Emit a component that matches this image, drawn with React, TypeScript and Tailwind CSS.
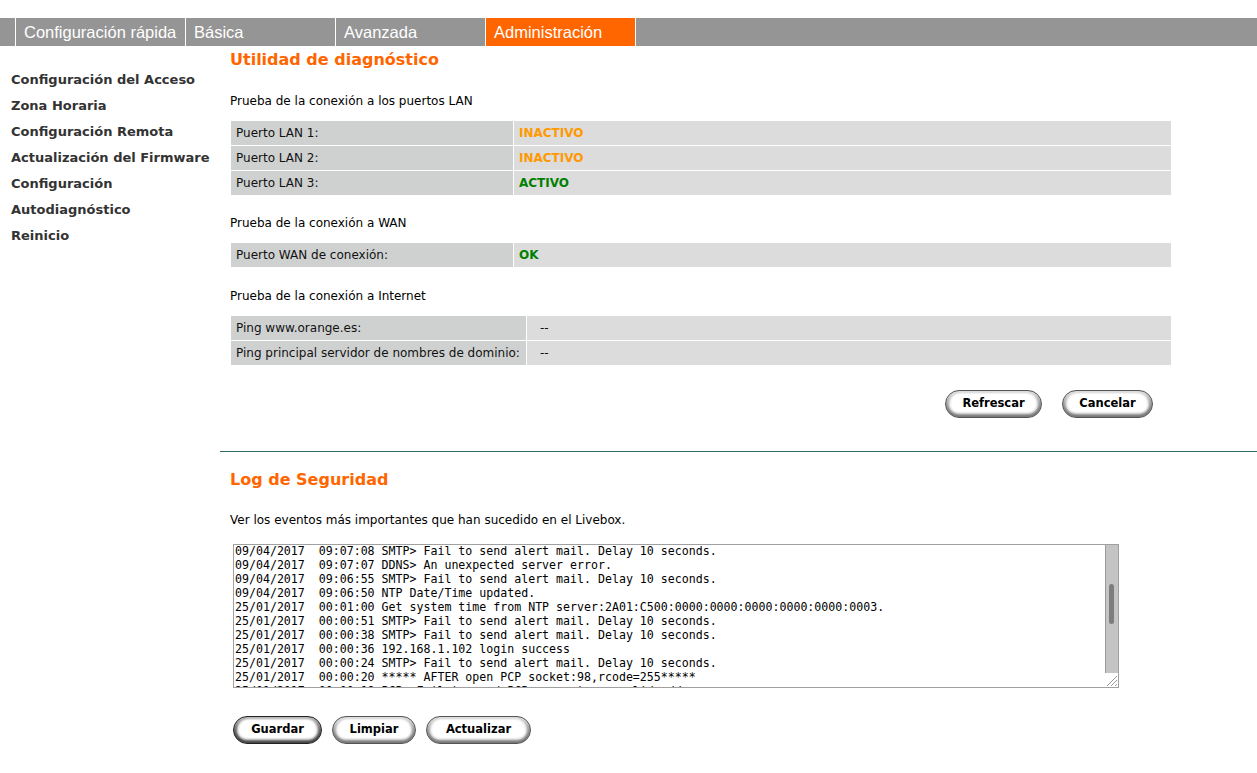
import React from 'react'

const tabs = [
  { label: 'Configuración rápida', w: 'w-[170px]', active: false },
  { label: 'Básica', w: 'w-[150px]', active: false },
  { label: 'Avanzada', w: 'w-[150px]', active: false },
  { label: 'Administración', w: 'w-[150px]', active: true },
]

const menu = [
  'Configuración del Acceso',
  'Zona Horaria',
  'Configuración Remota',
  'Actualización del Firmware',
  'Configuración',
  'Autodiagnóstico',
  'Reinicio',
]

const logLines = [
  '09/04/2017  09:07:08 SMTP> Fail to send alert mail. Delay 10 seconds.',
  '09/04/2017  09:07:07 DDNS> An unexpected server error.',
  '09/04/2017  09:06:55 SMTP> Fail to send alert mail. Delay 10 seconds.',
  '09/04/2017  09:06:50 NTP Date/Time updated.',
  '25/01/2017  00:01:00 Get system time from NTP server:2A01:C500:0000:0000:0000:0000:0000:0003.',
  '25/01/2017  00:00:51 SMTP> Fail to send alert mail. Delay 10 seconds.',
  '25/01/2017  00:00:38 SMTP> Fail to send alert mail. Delay 10 seconds.',
  '25/01/2017  00:00:36 192.168.1.102 login success',
  '25/01/2017  00:00:24 SMTP> Fail to send alert mail. Delay 10 seconds.',
  '25/01/2017  00:00:20 ***** AFTER open PCP socket:98,rcode=255*****',
  '25/01/2017  00:00:19 PCP> Fail to send PCP request, no valid address',
]

type Row = { label: string; value: string; tone?: 'warn' | 'ok' | 'plain' }

function StatusTable({ rows, labelW }: { rows: Row[]; labelW: string }) {
  return (
    <table className="w-[942px] border-separate border-spacing-[1px] text-[12px] text-[#111]">
      <tbody>
        {rows.map((r) => (
          <tr key={r.label} className="h-[24px]">
            <td className={`${labelW} bg-[#cfd1d0] px-[5px] align-middle`}>{r.label}</td>
            <td
              className={`bg-[#dcdcdc] align-middle ${
                r.tone === 'plain' ? 'pl-[13px]' : 'pl-[5px] font-bold'
              } ${r.tone === 'warn' ? 'text-[#ff9900]' : r.tone === 'ok' ? 'text-[#008000]' : 'text-[#111]'}`}
            >
              {r.value}
            </td>
          </tr>
        ))}
      </tbody>
    </table>
  )
}

function Pill({ label, w, primary }: { label: string; w: string; primary?: boolean }) {
  return (
    <button
      className={`${w} h-[28px] rounded-full bg-white text-[11.5px] font-bold text-black ${
        primary
          ? 'border border-[#222] shadow-[inset_0_-3px_3px_#444,inset_0_2px_2px_#bbb,inset_3px_0_3px_#666,inset_-3px_0_3px_#666]'
          : 'border border-[#555] shadow-[inset_0_-3px_3px_#777,inset_0_2px_2px_#ddd,inset_3px_0_3px_#aaa,inset_-3px_0_3px_#999]'
      }`}
    >
      {label}
    </button>
  )
}

export default function App() {
  return (
    <div className="min-h-[773px] w-[1257px] bg-white font-['DejaVu_Sans',sans-serif]">
      <div className="h-[18px]" />
      <nav className="flex h-[28px] bg-[#959595] font-['Liberation_Sans',Arial,sans-serif] text-[16.5px] text-white">
        <div className="w-[16px] border-r border-white" />
        {tabs.map((t) => (
          <div
            key={t.label}
            className={`${t.w} flex items-center border-r border-white pl-[8px] ${t.active ? 'bg-[#ff6600]' : ''}`}
          >
            {t.label}
          </div>
        ))}
      </nav>

      <div className="flex">
        <aside className="w-[220px] shrink-0 pl-[11px] pt-[21px]">
          {menu.map((m) => (
            <div key={m} className="h-[26px] text-[13px] font-bold leading-[26px] text-[#333]">
              {m}
            </div>
          ))}
        </aside>

        <main className="flex-1">
          <section className="pl-[10px]">
            <h1 className="mt-[1px] h-[26px] text-[16px] font-bold leading-[26px] text-[#ff6600]">
              Utilidad de diagnóstico
            </h1>
            <p className="mt-[20px] text-[12px] leading-[16px] text-black">
              Prueba de la conexión a los puertos LAN
            </p>
            <div className="mt-[11px]">
              <StatusTable
                labelW="w-[282px]"
                rows={[
                  { label: 'Puerto LAN 1:', value: 'INACTIVO', tone: 'warn' },
                  { label: 'Puerto LAN 2:', value: 'INACTIVO', tone: 'warn' },
                  { label: 'Puerto LAN 3:', value: 'ACTIVO', tone: 'ok' },
                ]}
              />
            </div>
            <p className="mt-[19px] text-[12px] leading-[16px] text-black">Prueba de la conexión a WAN</p>
            <div className="mt-[11px]">
              <StatusTable labelW="w-[282px]" rows={[{ label: 'Puerto WAN de conexión:', value: 'OK', tone: 'ok' }]} />
            </div>
            <p className="mt-[20px] text-[12px] leading-[16px] text-black">Prueba de la conexión a Internet</p>
            <div className="mt-[11px]">
              <StatusTable
                labelW="w-[295px]"
                rows={[
                  { label: 'Ping www.orange.es:', value: '--', tone: 'plain' },
                  { label: 'Ping principal servidor de nombres de dominio:', value: '--', tone: 'plain' },
                ]}
              />
            </div>
            <div className="mt-[24px] flex w-[942px] justify-end gap-[20px] pr-[19px]">
              <Pill label="Refrescar" w="w-[97px]" />
              <Pill label="Cancelar" w="w-[91px]" />
            </div>
          </section>

          <section className="mt-[33px] border-t border-[#2f6a6a] pl-[10px]">
            <h2 className="mt-[15px] h-[26px] text-[16px] font-bold leading-[26px] text-[#ff6600]">
              Log de Seguridad
            </h2>
            <p className="mt-[19px] text-[12px] leading-[16px] text-black">
              Ver los eventos más importantes que han sucedido en el Livebox.
            </p>
            <div className="relative ml-[3px] mt-[16px] h-[144px] w-[886px] overflow-hidden border border-[#a0a0a0] bg-white">
              <div className="-mt-[1px] pl-[1px] font-['DejaVu_Sans_Mono',monospace] text-[11.6px] leading-[14px] whitespace-pre text-black">
                {logLines.map((l, i) => (
                  <div key={i}>{l}</div>
                ))}
              </div>
              <div className="absolute right-0 top-0 h-[128px] w-[13px] border-l border-[#9a9a9a] bg-[#c4c4c4]">
                <div className="absolute left-[3px] top-[39px] h-[40px] w-[5px] rounded-full bg-[#7d7d7d]" />
              </div>
              <svg className="absolute bottom-0 right-0" width="14" height="14" viewBox="0 0 14 14">
                <path d="M13 3 L3 13 M13 7 L7 13 M13 11 L11 13" stroke="#999" strokeWidth="1" />
              </svg>
            </div>
            <div className="ml-[3px] mt-[28px] flex gap-[10px]">
              <Pill label="Guardar" w="w-[89px]" primary />
              <Pill label="Limpiar" w="w-[84px]" />
              <Pill label="Actualizar" w="w-[105px]" />
            </div>
          </section>
        </main>
      </div>
    </div>
  )
}
